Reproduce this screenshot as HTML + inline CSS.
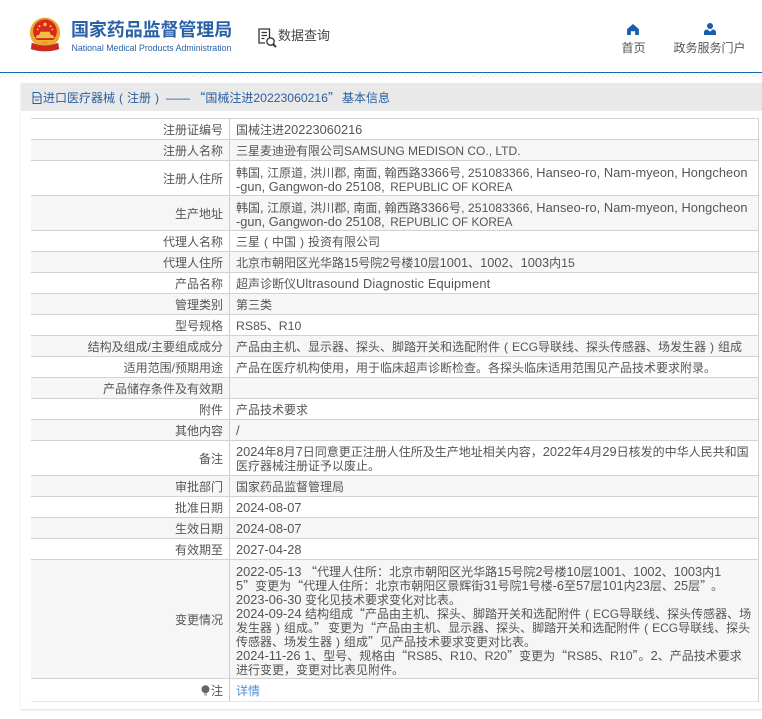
<!DOCTYPE html>
<html lang="zh-Hans"><head><meta charset="utf-8"><title>国家药品监督管理局</title>
<style>
html,body{margin:0;padding:0;background:#fff}
body{width:762px;height:719px;position:relative;overflow:hidden;font-family:"Liberation Sans","Noto Sans CJK SC",sans-serif;color:#444}
.a{position:absolute;white-space:nowrap}
.hdr-line{position:absolute;left:0;top:72px;width:762px;height:1px;background:#1c65ae}
.hatch{position:absolute;left:0;top:73px;width:762px;height:5px;background:repeating-linear-gradient(135deg,#ececec 0 1px,#fff 1px 3px)}
.box{position:absolute;left:21px;top:83px;width:741px;height:626px;background:#fff;box-shadow:0 1px 2px rgba(0,0,0,.14)}
.title{position:absolute;left:21px;top:83px;width:741px;height:28px;background:#e9e9e9;color:#2a5f9e;font-size:12px;line-height:29px;white-space:nowrap}
.r{position:absolute;left:31px;width:727px;border-top:1px solid #d3d3d3;box-sizing:border-box}
.r.g{background:#f6f6f6}
.l{position:absolute;left:0;top:0;bottom:0;border-right:1px solid #ccc;display:flex;align-items:center;justify-content:flex-end;padding-right:6px;width:192px;font-size:12px;color:#555;white-space:nowrap}
.v{position:absolute;left:205px;top:0;bottom:0;align-items:center;display:flex;font-size:12px;line-height:14px;color:#555;white-space:nowrap;padding-top:2px;box-sizing:border-box}
.v.t{padding-top:4px}
.v>div{white-space:nowrap}
i{font-style:normal;font-size:12.800px}
i.s{letter-spacing:.07px}
i.w{letter-spacing:.14px}
i.u{font-size:12px}
i.n{font-size:12.300px}
i.c{font-size:11.700px;margin-left:2px}
q{quotes:none;font-family:"Noto Sans CJK SC",sans-serif}
u{text-decoration:none;display:inline-block;width:12px;text-align:center}
em{font-style:normal;font-family:"Noto Sans CJK TC",sans-serif}
</style></head><body>
<svg class="a" style="left:29px;top:17px" width="32" height="35" viewBox="0 0 35 38">
<circle cx="17.5" cy="17" r="16.500" fill="#e8a92c"/>
<circle cx="17.5" cy="15.500" r="13" fill="#d8281f"/>
<circle cx="17.5" cy="8" r="1.800" fill="#f5d040"/>
<circle cx="11.5" cy="10" r="1.100" fill="#f5d040"/><circle cx="23.5" cy="10" r="1.100" fill="#f5d040"/>
<circle cx="9.5" cy="13.500" r="1" fill="#f5d040"/><circle cx="25.5" cy="13.500" r="1" fill="#f5d040"/>
<path d="M7 23h21l-2-3.500H9zM11 19.500l1.500-3.500h10l1.500 3.500z" fill="#f0c040"/>
<path d="M3 28q14.500 6 29 0l1 7q-15.500 5-31 0z" fill="#cc2a20"/>
<path d="M6 25h23v3H6z" fill="#eab030"/>
</svg>
<div class="a" style="left:71px;top:18px;font-size:18px;line-height:24px;font-weight:700;color:#2a62a8;letter-spacing:-.1px">国家药品监督管理局</div>
<div class="a" style="left:71.500px;top:42px;font-size:8.800px;line-height:12px;color:#2a62a8">National Medical Products Administration</div>
<svg class="a" style="left:258px;top:28px" width="20" height="20" viewBox="0 0 20 20" fill="none" stroke="#333" stroke-width="1.300">
<path d="M11.500 10V1H1v14h6"/><path d="M3.500 4.500h5.500M3.500 7.500h5.500M3.500 10.500h3"/><circle cx="12.500" cy="13.500" r="3.700"/><path d="M15.200 16.300l2.800 2.800" stroke-width="2"/>
</svg>
<div class="a" style="left:278px;top:26px;font-size:13px;line-height:20px;color:#444">数据查询</div>
<svg class="a" style="left:627px;top:24px" width="12" height="11" viewBox="0 0 14 13"><path d="M7 0L14 6V13H9.500V8.500H4.500V13H0V6z" fill="#1a5cb0"/></svg>
<div class="a" style="left:621.500px;top:40px;font-size:12px;line-height:16px;color:#555">首页</div>
<svg class="a" style="left:704px;top:23px" width="12" height="12" viewBox="0 0 14 14"><circle cx="7" cy="3.500" r="3.500" fill="#1a5cb0"/><path d="M0 14V11Q0 8.200 3.800 7.500L7 10L10.200 7.500Q14 8.200 14 11V14z" fill="#1a5cb0"/></svg>
<div class="a" style="left:673.500px;top:40px;font-size:12px;line-height:16px;color:#555">政务服务门户</div>
<div class="hdr-line"></div><div class="hatch"></div>
<div class="box"></div>
<div class="title"><svg class="a" style="left:11px;top:9px" width="10" height="12" viewBox="0 0 10 12" fill="none" stroke="#2a5f9e"><path d="M1 .5h5.500l2.500 2.500v8.500H1zM1 5h7.500M3 8h4"/></svg><span class="a" style="left:22px">进口医疗器械<u>(</u>注册<u>)</u><span style="margin-left:3px">——</span> <q>“</q>国械注进<i style="font-size:12.200px">20223060216</i><q>”</q><span style="margin-left:2px">基本信息</span></span></div>

<div class="r" style="top:118px;height:21px"><div class="l">注册证编号</div><div class="v"><div>国械注进<i>20223060216</i></div></div></div>
<div class="r g" style="top:139px;height:21px"><div class="l">注册人名称</div><div class="v"><div>三星麦迪逊有限公司<i class="u">SAMSUNG MEDISON CO., LTD.</i></div></div></div>
<div class="r" style="top:160px;height:35px"><div class="l">注册人住所</div><div class="v t"><div>韩国<i>, </i>江原道<i>, </i>洪川郡<i>, </i>南面<i>, </i>翰西路<i>3366</i>号<i class="n">, 251083366, </i><i class="s">Hanseo-ro, Nam-myeon, Hongcheon</i><br><i>-gun, Gangwon-do 25108, </i><i class="c">REPUBLIC OF KOREA</i></div></div></div>
<div class="r g" style="top:195px;height:35px"><div class="l">生产地址</div><div class="v t"><div>韩国<i>, </i>江原道<i>, </i>洪川郡<i>, </i>南面<i>, </i>翰西路<i>3366</i>号<i class="n">, 251083366, </i><i class="s">Hanseo-ro, Nam-myeon, Hongcheon</i><br><i>-gun, Gangwon-do 25108, </i><i class="c">REPUBLIC OF KOREA</i></div></div></div>
<div class="r" style="top:230px;height:21px"><div class="l">代理人名称</div><div class="v"><div>三星<u>(</u>中国<u>)</u>投资有限公司</div></div></div>
<div class="r g" style="top:251px;height:21px"><div class="l">代理人住所</div><div class="v"><div>北京市朝阳区光华路<i>15</i>号院<i>2</i>号楼<i>10</i>层<i>1001</i>、<i>1002</i>、<i>1003</i>内<i class="n">15</i></div></div></div>
<div class="r" style="top:272px;height:21px"><div class="l">产品名称</div><div class="v"><div>超声诊断仪<i class="w">Ultrasound Diagnostic Equipment</i></div></div></div>
<div class="r g" style="top:293px;height:21px"><div class="l">管理类别</div><div class="v"><div>第三类</div></div></div>
<div class="r" style="top:314px;height:21px"><div class="l">型号规格</div><div class="v"><div><i class="n">RS85</i>、<i class="n">R10</i></div></div></div>
<div class="r g" style="top:335px;height:21px"><div class="l">结构及组成/主要组成成分</div><div class="v"><div>产品由主机、显示器、探头、脚踏开关和选配附件<u>(</u><i class="u">ECG</i>导联线、探头传感器、场发生器<u>)</u>组成</div></div></div>
<div class="r" style="top:356px;height:21px"><div class="l">适用范围/预期用途</div><div class="v"><div>产品在医疗机构使用<em>，</em>用于临床超声诊断检查。各探头临床适用范围见产品技术要求附录。</div></div></div>
<div class="r g" style="top:377px;height:21px"><div class="l">产品储存条件及有效期</div><div class="v"></div></div>
<div class="r" style="top:398px;height:21px"><div class="l">附件</div><div class="v"><div>产品技术要求</div></div></div>
<div class="r g" style="top:419px;height:21px"><div class="l">其他内容</div><div class="v"><div><i>/</i></div></div></div>
<div class="r" style="top:440px;height:35px"><div class="l">备注</div><div class="v"><div><i>2024</i>年<i>8</i>月<i>7</i>日同意更正注册人住所及生产地址相关内容<em>，</em><i>2022</i>年<i>4</i>月<i>29</i>日核发的中华人民共和国<br>医疗器械注册证予以废止。</div></div></div>
<div class="r g" style="top:475px;height:21px"><div class="l">审批部门</div><div class="v"><div>国家药品监督管理局</div></div></div>
<div class="r" style="top:496px;height:21px"><div class="l">批准日期</div><div class="v"><div><i>2024-08-07</i></div></div></div>
<div class="r g" style="top:517px;height:21px"><div class="l">生效日期</div><div class="v"><div><i>2024-08-07</i></div></div></div>
<div class="r" style="top:538px;height:21px"><div class="l">有效期至</div><div class="v"><div><i>2027-04-28</i></div></div></div>
<div class="r g" style="top:559px;height:119px"><div class="l">变更情况</div><div class="v t"><div><i>2022-05-13 </i><q>“</q>代理人住所<em>：</em>北京市朝阳区光华路<i>15</i>号院<i>2</i>号楼<i>10</i>层<i>1001</i>、<i>1002</i>、<i>1003</i>内<i>1</i><br><i>5</i><q>”</q>变更为<q>“</q>代理人住所<em>：</em>北京市朝阳区景辉街<i>31</i>号院<i>1</i>号楼<i>-6</i>至<i>57</i>层<i>101</i>内<i>23</i>层、<i>25</i>层<q>”</q><span style="margin-left:5px">。</span><br><i>2023-06-30 </i>变化见技术要求变化对比表。<br><i>2024-09-24 </i>结构组成<q>“</q>产品由主机、探头、脚踏开关和选配附件<u>(</u><i class="u">ECG</i>导联线、探头传感器、场<br>发生器<u>)</u>组成。<q>”</q><span style="margin-left:2px"></span>变更为<q>“</q>产品由主机、显示器、探头、脚踏开关和选配附件<u>(</u><i class="u">ECG</i>导联线、探头<br>传感器、场发生器<u>)</u>组成<q>”</q>见产品技术要求变更对比表。<br><i>2024-11-26 1</i>、型号、规格由<q>“</q><i class="n">RS85</i>、<i class="n">R10</i>、<i class="n">R20</i><q>”</q>变更为<q>“</q><i class="n">RS85</i>、<i class="n">R10</i><q>”</q>。<i>2</i>、产品技术要求<br>进行变更<em>，</em>变更对比表见附件。</div></div></div>
<div class="r" style="top:678px;height:24px;border-bottom:1px solid #e6e6e6"><div class="l"><svg width="9" height="11" viewBox="0 0 9 11" style="margin-right:1px"><circle cx="4.500" cy="4.200" r="4" fill="#666"/><rect x="3" y="8.500" width="3" height="2" fill="#aaa"/></svg>注</div><div class="v" style="color:#4a90d9"><div>详情</div></div></div>
<div class="a" style="left:758px;top:118px;width:1px;height:584px;background:#d3d3d3"></div>
</body></html>
